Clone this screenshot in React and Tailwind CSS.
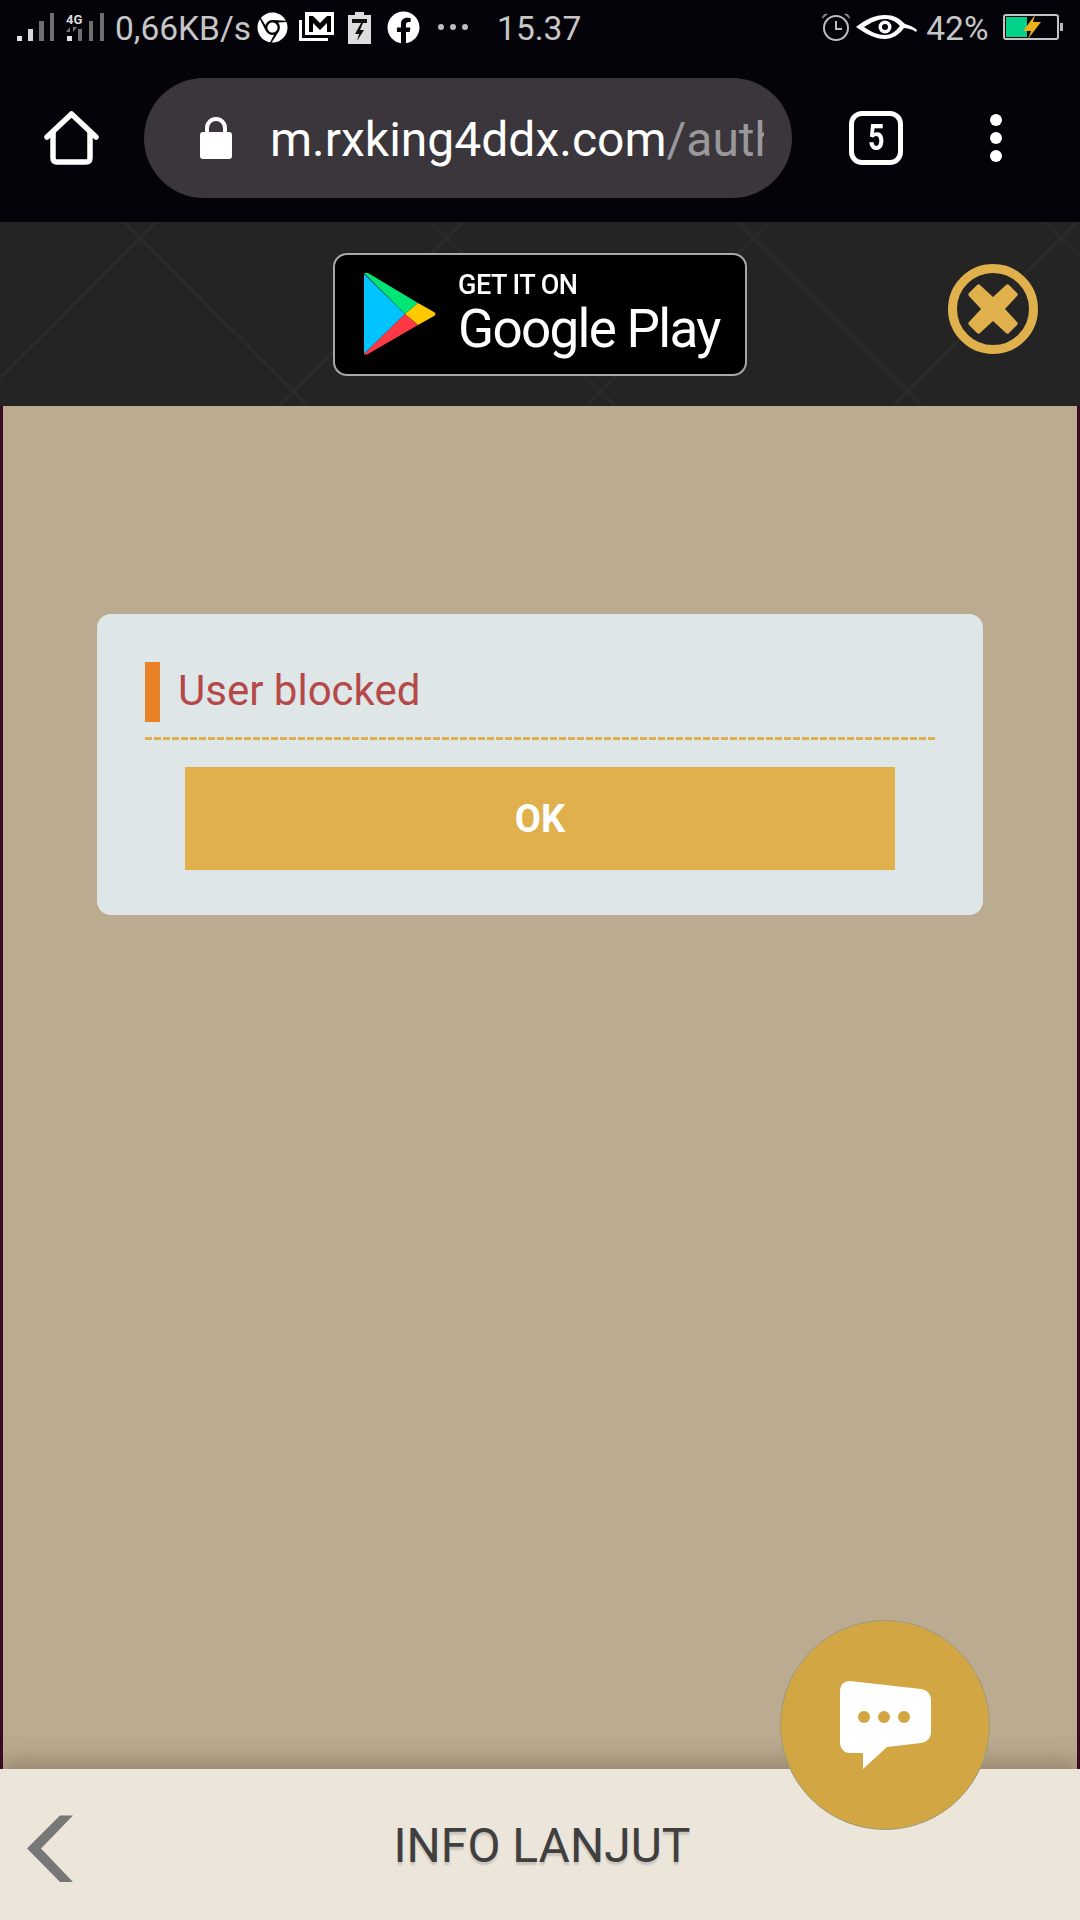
import { FaChrome, FaFacebook } from 'react-icons/fa'

function SignalIcon() {
  return (
    <svg width="90" height="32" viewBox="16 11 90 32" className="shrink-0">
      <rect x="17" y="36" width="5" height="5" fill="#e4e4e4" />
      <rect x="28" y="29" width="5" height="12" fill="#d8d8d8" />
      <rect x="39" y="21" width="5" height="20" fill="#6f6f6f" />
      <rect x="50" y="13" width="4" height="28" fill="#6f6f6f" />
      <text x="66" y="24" fontSize="13" fontWeight="700" fill="#dcdcdc" fontFamily="Roboto, sans-serif">4G</text>
      <path d="M70 32v-5l-4 5zM73 27v5l4-5z" fill="#777" />
      <rect x="67" y="36" width="5" height="5" fill="#e4e4e4" />
      <rect x="78" y="29" width="4" height="12" fill="#6f6f6f" />
      <rect x="89" y="21" width="4" height="20" fill="#6f6f6f" />
      <rect x="100" y="13" width="4" height="28" fill="#6f6f6f" />
    </svg>
  )
}

function MailIcon() {
  return (
    <svg width="36" height="32" viewBox="298 11 36 32" className="shrink-0">
      <path d="M298 20h3v18h26v3h-29z" fill="#fff" />
      <rect x="304" y="12" width="29" height="23" fill="#fff" />
      <path d="M308 16h4l7 7 7-7h4v16h-4v-9l-7 7-7-7v9h-4z" fill="#000" />
    </svg>
  )
}

function BatterySaverIcon() {
  return (
    <svg width="24" height="33" viewBox="347 10 24 33" className="shrink-0">
      <path d="M354 11h9v3h7v29h-23V14h7z" fill="#dedede" />
      <rect x="351" y="18" width="15" height="4" fill="#111" />
      <path d="M360 22l-6 11h4l-2 7 7-11h-4l3-7z" fill="#111" />
    </svg>
  )
}

function AlarmIcon() {
  return (
    <svg width="30" height="30" viewBox="821 12 30 30" fill="none" className="shrink-0">
      <circle cx="836" cy="28" r="12" stroke="#bdbdbd" strokeWidth="2" />
      <path d="M836 21v8h6" stroke="#bdbdbd" strokeWidth="2" />
      <path d="M822 19c0-4 3-6 6-5zM850 19c0-4-3-6-6-5z" fill="#8a8a8a" />
    </svg>
  )
}

function EyeIcon() {
  return (
    <svg width="62" height="28" viewBox="855 13 62 28" className="shrink-0">
      <path d="M856 27c10-8 19-12 29-12 9 0 14 3 20 9 4 1 9 3 12 6l-1 2c-4-3-9-4-12-4-5 7-12 11-19 11-11 0-20-6-29-12z" fill="#fff" />
      <path d="M864 27c8-5 14-8 21-8 6 0 10 2 15 7-5 6-9 9-15 9-7 0-14-3-21-8z" fill="#05030a" />
      <circle cx="885" cy="27" r="6.500" fill="#fff" />
      <circle cx="885" cy="27" r="3" fill="#05030a" />
    </svg>
  )
}

function BatteryIcon() {
  return (
    <svg width="60" height="28" viewBox="1004 13 60 28" className="shrink-0">
      <rect x="1005" y="15" width="54" height="24" rx="2" fill="none" stroke="#c4c4c4" strokeWidth="2" />
      <rect x="1007" y="17" width="21" height="20" fill="#00d28a" />
      <rect x="1061" y="23" width="3" height="8" fill="#bbb" />
      <path d="M1036 15l-12 16h8l-3 8 13-17h-8z" fill="#e8b31a" />
    </svg>
  )
}

function PlayLogo() {
  return (
    <svg width="74" height="82" viewBox="362 273 74 82" className="shrink-0">
      <path d="M363 274l41 40-41 40z" fill="#00c3ff" />
      <path d="M363 273c1-1 3-1 4 0l50 30-13 11z" fill="#00e676" />
      <path d="M417 303l16 9c2 1 2 3 0 4l-16 9-13-11z" fill="#ffc900" />
      <path d="M363 354l41-40 13 11-50 29c-1 1-3 1-4 0z" fill="#ff3a44" />
    </svg>
  )
}

export default function App() {
  return (
    <div className="relative flex h-[1920px] w-[1080px] flex-col overflow-hidden bg-[#bbab90] font-['Roboto',sans-serif]">
      <div className="h-[222px] shrink-0 bg-[#05030a]">
        <div className="flex h-[54px] items-center pl-[16px] text-[33.5px] leading-none text-[#c6c6c6]">
          <SignalIcon />
          <span className="ml-[9px] mt-[4px]">0,66KB/s</span>
          <FaChrome className="ml-[6px] shrink-0 text-[31px] text-white" />
          <span className="ml-[11px] flex"><MailIcon /></span>
          <span className="ml-[13px] flex"><BatterySaverIcon /></span>
          <FaFacebook className="ml-[15px] shrink-0 text-[33px] text-white" />
          <span className="ml-[18px] flex gap-[6px]">
            <i className="size-[6px] rounded-full bg-[#bdbdbd]" />
            <i className="size-[6px] rounded-full bg-[#bdbdbd]" />
            <i className="size-[6px] rounded-full bg-[#bdbdbd]" />
          </span>
          <span className="ml-[29px] mt-[4px]">15.37</span>
          <span className="ml-[240px] flex"><AlarmIcon /></span>
          <span className="ml-[4px] flex"><EyeIcon /></span>
          <span className="ml-[9px] mt-[4px]">42%</span>
          <span className="ml-[15px] flex"><BatteryIcon /></span>
        </div>
        <div className="mt-[24px] flex h-[120px] items-center">
          <svg width="56" height="54" viewBox="0 0 56 54" fill="none" className="ml-[44px] shrink-0">
            <path d="M3 26L27.500 3 52 26" stroke="#fff" strokeWidth="5.500" strokeLinecap="round" strokeLinejoin="round" />
            <path d="M9 21v25.500c0 3 1 4.500 4 4.500h29c3 0 4-1.500 4-4.500V21" stroke="#fff" strokeWidth="5.500" />
          </svg>
          <div className="ml-[44px] flex h-[120px] w-[648px] shrink-0 items-center rounded-full bg-[#3a363c] pl-[56px]">
            <svg width="32" height="42" viewBox="0 0 32 42" className="shrink-0">
              <path d="M7 17v-6a9 9 0 0 1 18 0v6" fill="none" stroke="#fff" strokeWidth="4" />
              <rect y="15" width="32" height="27" rx="3" fill="#fff" />
            </svg>
            <div className="ml-[38px] mt-[3px] w-[494px] overflow-hidden whitespace-nowrap text-[48px] leading-[56px] text-white">
              m.rxking4ddx.com<span className="text-[#9b989c]">/auth</span>
            </div>
          </div>
          <div className="ml-[57px] flex h-[54px] w-[54px] shrink-0 items-center justify-center rounded-[13px] border-[5px] border-white text-white">
            <span className="scale-x-80 text-[36px] font-bold leading-none">5</span>
          </div>
          <div className="ml-[87px] flex shrink-0 flex-col gap-[6px]">
            <i className="size-[12px] rounded-full bg-white" />
            <i className="size-[12px] rounded-full bg-white" />
            <i className="size-[12px] rounded-full bg-white" />
          </div>
        </div>
      </div>

      <div className="relative flex h-[184px] shrink-0 items-center justify-center overflow-hidden bg-[#242424]">
        <svg className="absolute inset-0 blur-[1px]" width="1080" height="184" viewBox="0 222 1080 184" fill="none" stroke="#2c2c2c" strokeWidth="3">
          <path d="M378 0L0 378M685 0L279 406M992 0L586 406M1299 0L893 406" />
          <path d="M0 98L308 406M209 0L615 406M516 0L922 406M823 0L1229 406" />
        </svg>
        <div className="relative flex h-[123px] w-[414px] items-center rounded-[14px] border-2 border-[#a8a8a8] bg-black pl-[28px] blur-[0.4px]">
          <PlayLogo />
          <div className="ml-[21px] flex flex-col text-white">
            <span className="mb-[2px] text-[27px] font-medium leading-[28px] tracking-[-0.5px]">GET IT ON</span>
            <span className="whitespace-nowrap text-[53px] font-normal leading-[56px] tracking-[-1.7px]">Google Play</span>
          </div>
        </div>
        <svg width="90" height="90" viewBox="0 0 90 90" className="absolute right-[42px] top-[42px]">
          <circle cx="45" cy="45" r="40.500" fill="none" stroke="#e0b04c" strokeWidth="9" />
          <path d="M45 33L58 21c1-1 2-1 3 0l8 8c1 1 1 2 0 3L57 45l12 13c1 1 1 2 0 3l-8 8c-1 1-2 1-3 0L45 57 32 69c-1 1-2 1-3 0l-8-8c-1-1-1-2 0-3l12-13-12-13c-1-1-1-2 0-3l8-8c1-1 2-1 3 0z" fill="#e0b04c" />
        </svg>
      </div>

      <div className="min-h-0 flex-1 border-x-[3px] border-[#3a0a24] bg-[#bbab90] pl-[94px] pt-[208px]">
        <div className="h-[301px] w-[886px] rounded-[14px] bg-[#dfe6e7] px-[48px] pt-[48px]">
          <div className="flex h-[60px] items-center">
            <div className="h-[60px] w-[15px] bg-[#e98226]" />
            <h1 className="mb-[2px] ml-[18px] text-[42px] font-normal leading-none text-[#b5494a]">User blocked</h1>
          </div>
          <div className="mt-[15px] h-[3px] bg-[repeating-linear-gradient(90deg,#e0b04c_0_7px,transparent_7px_9px)]" />
          <button type="button" className="mx-[40px] mt-[27px] flex h-[103px] w-[710px] items-center justify-center bg-[#e0b04c] pt-[2px] text-[38px] font-bold text-white">OK</button>
        </div>
      </div>

      <div className="flex h-[151px] shrink-0 items-center justify-center bg-[#ece5da] pl-[4px] pt-[2px] shadow-[0_-6px_24px_rgba(60,45,25,0.35)]">
        <svg width="46" height="67" viewBox="0 0 46 67" className="absolute bottom-[38px] left-[27px]">
          <path d="M33 0.500h13L14 33.500 46 67H33L0 33.500z" fill="#777" />
        </svg>
        <span className="text-[48px] leading-none text-[#3f3f3f] [text-shadow:0_3px_2px_rgba(0,0,0,0.15)]">INFO LANJUT</span>
      </div>

      <div className="absolute left-[780px] top-[1620px] flex size-[210px] items-center justify-center rounded-full border border-[#9c9a80] bg-[#d2a642]">
        <svg width="94" height="90" viewBox="839 1688 94 90">
          <path d="M851 1689L922 1697c6 1 10 5 10 11v32c0 6-4 10-10 11l-34 4-24 22v-16h-13c-6 0-10-5-10-10v-52c0-6 4-10 10-10z" fill="#fff" />
          <circle cx="865" cy="1725" r="6" fill="#d2a642" />
          <circle cx="885" cy="1725" r="6" fill="#d2a642" />
          <circle cx="905" cy="1725" r="6" fill="#d2a642" />
        </svg>
      </div>
    </div>
  )
}
